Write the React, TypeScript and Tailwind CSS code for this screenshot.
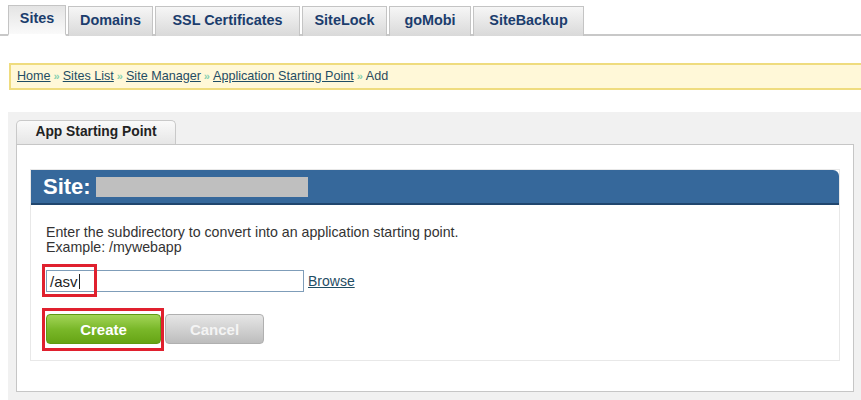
import React from 'react';

const tabs = ['Sites', 'Domains', 'SSL Certificates', 'SiteLock', 'goMobi', 'SiteBackup'];
const tabWidths = ['w-[58px]', 'w-[85px]', 'w-[145px]', 'w-[85px]', 'w-[82px]', 'w-[111px]'];

const crumbs = ['Home', 'Sites List', 'Site Manager', 'Application Starting Point'];

function Sep() {
    return <span className="mx-[3px] text-[11px] font-bold text-[#86d0b0]">»</span>;
}

export default function App() {
    return (
        <div className="h-[400px] w-[861px] overflow-hidden bg-white font-['Liberation_Sans',Arial,sans-serif]">
            {/* Top tabs */}
            <div className="flex items-end gap-[2px] border-b-2 border-[#c8c8c8] pl-[8px] pt-[5px]">
                {tabs.map((t, i) => (
                    <div
                        key={t}
                        className={`${tabWidths[i]} -mb-[2px] flex h-[30px] items-center justify-center border border-b-0 border-[#c4c4c4] pb-[2px] text-[14.4px] font-bold text-[#1b3d6d] ${
                            i === 0
                                ? 'h-[31px] bg-gradient-to-b from-[#e4e4e4] to-[#fafafa] border-b-2 border-b-white'
                                : 'bg-gradient-to-b from-[#f6f6f6] to-[#d9d9d9]'
                        }`}
                    >
                        {t}
                    </div>
                ))}
            </div>

            {/* Breadcrumb */}
            <div className="ml-[9px] mt-[27px] flex h-[27px] items-center border-y-2 border-l-2 border-[#efdc7e] bg-[#fff8d8] pl-[6px] text-[12.6px] text-[#2d4a5c]">
                {crumbs.map((c) => (
                    <React.Fragment key={c}>
                        <a className="text-[#1f4d64] underline" href="#">
                            {c}
                        </a>
                        <Sep />
                    </React.Fragment>
                ))}
                <span>Add</span>
            </div>

            {/* Main panel */}
            <div className="ml-[8px] mt-[22px] h-[300px] bg-[#f1f1f1] pl-[8px] pr-[7px] pt-[8px]">
                <div className="flex">
                    <div className="flex h-[24px] w-[160px] items-center justify-center rounded-t-[5px] border border-b-0 border-[#c9c9c9] bg-gradient-to-b from-[#fafafa] to-[#e6e6e6] text-[13.8px] font-bold text-[#222]">
                        App Starting Point
                    </div>
                </div>
                <div className="h-[248px] border border-[#c6c6c6] bg-white px-[13px] pt-[24px]">
                    <div className="border border-[#e8e8e8]">
                        <div className="flex h-[35px] items-center rounded-tr-[6px] border-b-2 border-[#20466e] bg-[#36689b] pl-[12px]">
                            <span className="text-[22px] font-bold text-white">Site:</span>
                            <div className="ml-[5px] h-[20px] w-[212px] bg-[#bfbfbf]" />
                        </div>
                        <div className="h-[155px] px-[15px] pt-[20px] text-[14.2px] leading-[15px] text-[#333]">
                            <p>Enter the subdirectory to convert into an application starting point.</p>
                            <p>Example: /mywebapp</p>
                            <div className="mt-[15px] flex items-center">
                                <div className="relative">
                                    <div className="flex h-[22px] w-[258px] items-center border border-[#7f9db9] px-[3px] text-[15px] text-[#222]">
                                        /asv<span className="ml-[1px] h-[15px] w-px bg-[#222]" />
                                    </div>
                                    <div className="absolute -left-[4px] -top-[6px] h-[33px] w-[55px] border-[3px] border-[#e0202e]" />
                                </div>
                                <a href="#" className="ml-[4px] text-[14px] text-[#1f4d64] underline">
                                    Browse
                                </a>
                            </div>
                            <div className="mt-[22px] flex gap-[4px]">
                                <div className="relative">
                                    <div className="flex h-[30px] w-[115px] items-center justify-center rounded-[4px] border border-[#5f9a13] bg-gradient-to-b from-[#a3d555] via-[#7ab829] to-[#66a414] text-[15px] font-bold text-white">
                                        Create
                                    </div>
                                    <div className="absolute -left-[4px] -top-[6px] h-[43px] w-[122px] border-[3px] border-[#e0202e]" />
                                </div>
                                <div className="flex h-[30px] w-[99px] items-center justify-center rounded-[4px] border border-[#b0b0b0] bg-gradient-to-b from-[#e6e6e6] to-[#bdbdbd] text-[15px] font-bold text-[#f4f4f4]">
                                    Cancel
                                </div>
                            </div>
                        </div>
                    </div>
                </div>
            </div>
        </div>
    );
}
